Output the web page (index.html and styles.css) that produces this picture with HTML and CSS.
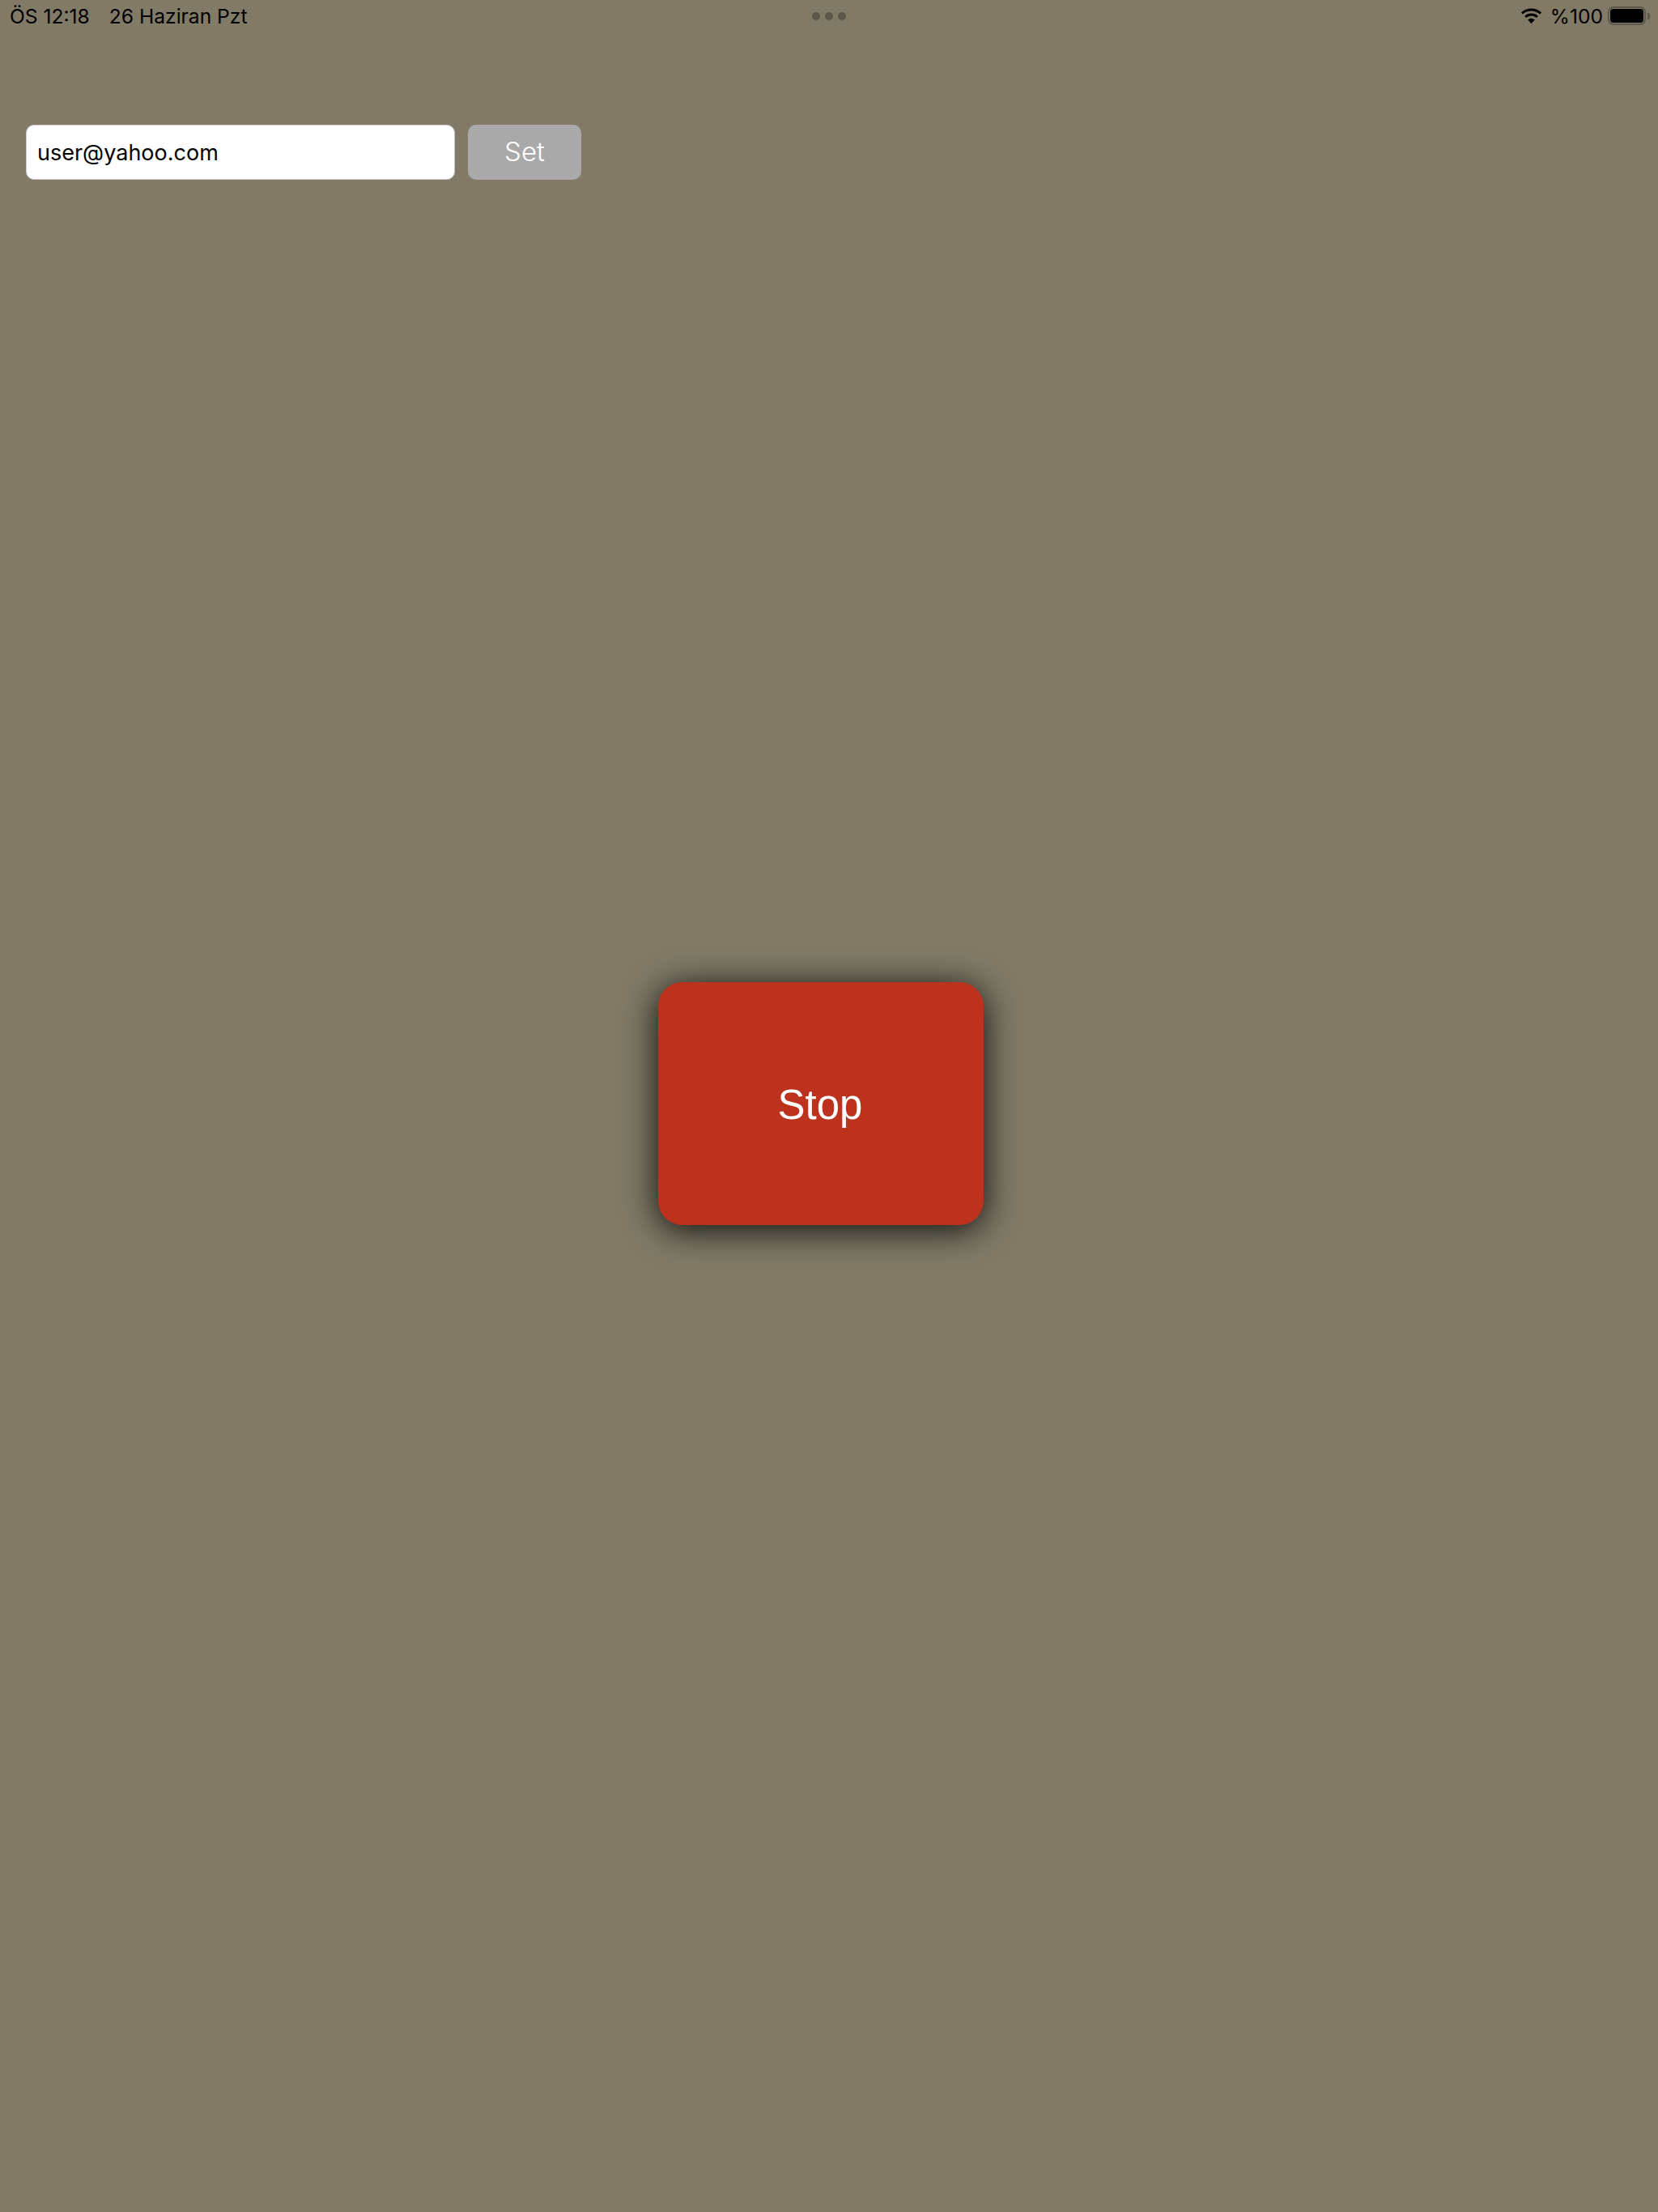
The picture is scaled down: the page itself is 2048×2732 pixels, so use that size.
FILE: index.html
```html
<!DOCTYPE html>
<html lang="tr">
<head>
<meta charset="utf-8">
<title>Stop</title>
<link rel="stylesheet" href="styles.css">
</head>
<body>
<header class="status">
  <div class="status-left"><span>ÖS 12:18</span><span>26 Haziran Pzt</span></div>
  <div class="dots"><i></i><i></i><i></i></div>
  <div class="status-right">
    <svg class="wifi" viewBox="0 0 28 20" aria-hidden="true">
      <path d="M14 3.4c4.1 0 7.8 1.6 10.6 4.2l2-2.2A18.4 18.4 0 0 0 14 .4 18.4 18.4 0 0 0 1.400 5.400l2 2.200A15.400 15.400 0 0 1 14 3.400z"/>
      <path d="M14 9.600c2.400 0 4.600.9 6.300 2.500l2.100-2.200A12.300 12.300 0 0 0 14 6.600c-3.200 0-6.200 1.200-8.400 3.300l2.100 2.200A9.200 9.200 0 0 1 14 9.600z"/>
      <path d="M14 12.700c-1.700 0-3.200.6-4.300 1.700l4.300 4.800 4.300-4.800a6.200 6.200 0 0 0-4.300-1.700z"/>
    </svg>
    <span class="pct">%100</span>
    <div class="battery"><div class="battery-fill"></div></div>
    <div class="battery-nub"></div>
  </div>
</header>
<main class="main">
  <form class="email-row">
    <div class="email-field">user@yahoo.com</div>
    <button class="set-btn" type="button">Set</button>
  </form>
  <button class="stop-btn" type="button">Stop</button>
</main>
</body>
</html>
```
FILE: styles.css
```css
* { box-sizing: border-box; }
html, body { margin: 0; height: 100%; }
body {
  width: 2048px;
  height: 2732px;
  background: #807a67;
  font-family: "Inter", "Liberation Sans", sans-serif;
  color: #000;
  overflow: hidden;
}
.status {
  height: 39px;
  padding: 0 10px;
  display: grid;
  grid-template-columns: 1fr auto 1fr;
  align-items: center;
  font-size: 24.6px;
}
.status-left { display: flex; gap: 24px; padding-left: 2px; }
.dots { display: flex; gap: 6px; }
.dots i { width: 10px; height: 10px; border-radius: 50%; background: #5a5648; }
.status-right { display: flex; align-items: center; justify-content: flex-end; }
.wifi { width: 29px; height: 20px; fill: #000; margin-right: 9px; }
.pct { margin-right: 6px; }
.battery {
  width: 47px;
  height: 23px;
  border: 2px solid #5c584a;
  border-radius: 7px;
  padding: 1px;
}
.battery-fill { height: 100%; background: #000; border-radius: 4px; }
.battery-nub {
  width: 3px;
  height: 8px;
  margin-left: 2px;
  background: #5c584a;
  border-radius: 0 2px 2px 0;
}
.main { display: flex; flex-direction: column; align-items: flex-start; }
.email-row {
  display: flex;
  gap: 16px;
  margin: 115px 0 0 32px;
  height: 68px;
}
.email-field {
  width: 530px;
  padding-left: 13px;
  display: flex;
  align-items: center;
  background: #fff;
  border: 1px solid #ccc;
  border-radius: 10px;
  font-size: 27px;
}
.set-btn {
  width: 140px;
  border: 0;
  padding: 0 0 2px;
  background: #a9a9a9;
  border-radius: 10px;
  color: #fff;
  font-family: "Inter", "Liberation Sans", sans-serif;
  font-weight: 300;
  font-size: 33px;
}
.stop-btn {
  width: 402px;
  height: 300px;
  margin: 991px 0 0 813px;
  border: 0;
  padding: 2px 2px 0 0;
  background: #bd321c;
  border-radius: 30px;
  box-shadow: 0 6px 44px rgba(0, 0, 0, 0.9);
  color: #fff;
  font-family: "Liberation Sans", sans-serif;
  font-size: 51px;
}
```
